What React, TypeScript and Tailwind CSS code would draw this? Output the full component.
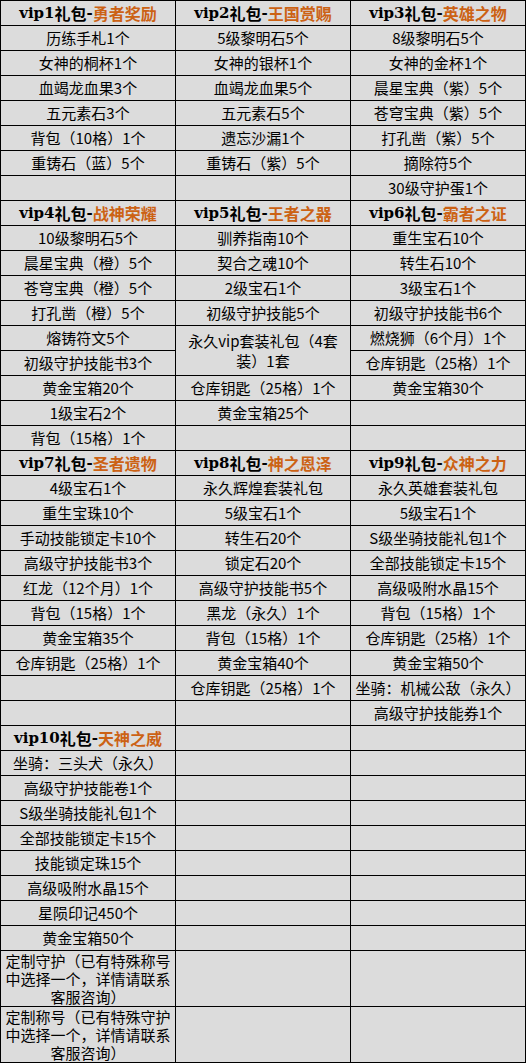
import React from "react";

type Cell =
  | string
  | { h: [string, string] }
  | { span: string[] }
  | { tall: string[] }
  | null;

const SKIP = null;

const rows: Cell[][] = [
  [{ h: ["vip1", "勇者奖励"] }, { h: ["vip2", "王国赏赐"] }, { h: ["vip3", "英雄之物"] }],
  ["历练手札1个", "5级黎明石5个", "8级黎明石5个"],
  ["女神的桐杯1个", "女神的银杯1个", "女神的金杯1个"],
  ["血竭龙血果3个", "血竭龙血果5个", "晨星宝典（紫）5个"],
  ["五元素石3个", "五元素石5个", "苍穹宝典（紫）5个"],
  ["背包（10格）1个", "遗忘沙漏1个", "打孔凿（紫）5个"],
  ["重铸石（蓝）5个", "重铸石（紫）5个", "摘除符5个"],
  ["", "", "30级守护蛋1个"],
  [{ h: ["vip4", "战神荣耀"] }, { h: ["vip5", "王者之器"] }, { h: ["vip6", "霸者之证"] }],
  ["10级黎明石5个", "驯养指南10个", "重生宝石10个"],
  ["晨星宝典（橙）5个", "契合之魂10个", "转生石10个"],
  ["苍穹宝典（橙）5个", "2级宝石1个", "3级宝石1个"],
  ["打孔凿（橙）5个", "初级守护技能5个", "初级守护技能书6个"],
  ["熔铸符文5个", { span: ["永久vip套装礼包（4套", "装）1套"] }, "燃烧狮（6个月）1个"],
  ["初级守护技能书3个", SKIP, "仓库钥匙（25格）1个"],
  ["黄金宝箱20个", "仓库钥匙（25格）1个", "黄金宝箱30个"],
  ["1级宝石2个", "黄金宝箱25个", ""],
  ["背包（15格）1个", "", ""],
  [{ h: ["vip7", "圣者遗物"] }, { h: ["vip8", "神之恩泽"] }, { h: ["vip9", "众神之力"] }],
  ["4级宝石1个", "永久辉煌套装礼包", "永久英雄套装礼包"],
  ["重生宝珠10个", "5级宝石1个", "5级宝石1个"],
  ["手动技能锁定卡10个", "转生石20个", "S级坐骑技能礼包1个"],
  ["高级守护技能书3个", "锁定石20个", "全部技能锁定卡15个"],
  ["红龙（12个月）1个", "高级守护技能书5个", "高级吸附水晶15个"],
  ["背包（15格）1个", "黑龙（永久）1个", "背包（15格）1个"],
  ["黄金宝箱35个", "背包（15格）1个", "仓库钥匙（25格）1个"],
  ["仓库钥匙（25格）1个", "黄金宝箱40个", "黄金宝箱50个"],
  ["", "仓库钥匙（25格）1个", "坐骑：机械公敌（永久）"],
  ["", "", "高级守护技能券1个"],
  [{ h: ["vip10", "天神之威"] }, "", ""],
  ["坐骑：三头犬（永久）", "", ""],
  ["高级守护技能卷1个", "", ""],
  ["S级坐骑技能礼包1个", "", ""],
  ["全部技能锁定卡15个", "", ""],
  ["技能锁定珠15个", "", ""],
  ["高级吸附水晶15个", "", ""],
  ["星陨印记450个", "", ""],
  ["黄金宝箱50个", "", ""],
  [{ tall: ["定制守护（已有特殊称号", "中选择一个，详情请联系", "客服咨询）"] }, { tall: [] }, { tall: [] }],
  [{ tall: ["定制称号（已有特殊守护", "中选择一个，详情请联系", "客服咨询）"] }, { tall: [] }, { tall: [] }],
];

function renderCell(c: Cell, key: string) {
  if (c === null) return null;
  if (typeof c === "string") {
    return (
      <div
        key={key}
        className="h-[24px] bg-[#dcdcdc] flex items-center justify-center text-center text-[15px] leading-[24px] text-black whitespace-nowrap overflow-hidden"
      >
        {c}
      </div>
    );
  }
  if ("h" in c) {
    return (
      <div
        key={key}
        className="h-[24px] bg-[#dcdcdc] flex items-center justify-center text-[16px] leading-[24px] font-bold text-black whitespace-nowrap"
      >
        <span className="text-[15px] font-['DejaVu_Serif',serif]">{c.h[0]}</span>
        <span>礼包</span>
        <span className="text-[15px] font-['DejaVu_Serif',serif]">-</span>
        <span className="text-[#cc6214]">{c.h[1]}</span>
      </div>
    );
  }
  if ("span" in c) {
    return (
      <div
        key={key}
        className="row-span-2 bg-[#dcdcdc] flex items-center justify-center text-center text-[15px] leading-[20px] text-black"
      >
        <p className="whitespace-nowrap">
          {c.span[0]}
          <br />
          {c.span[1]}
        </p>
      </div>
    );
  }
  return (
    <div
      key={key}
      className="h-[55px] bg-[#dcdcdc] flex items-center justify-center text-center text-[15px] leading-[18px] text-black"
    >
      {c.tall.length > 0 && (
        <p className="whitespace-nowrap">
          {c.tall[0]}
          <br />
          {c.tall[1]}
          <br />
          {c.tall[2]}
        </p>
      )}
    </div>
  );
}

export default function App() {
  return (
    <div className="w-[526px] bg-black p-px grid grid-cols-[174px_174px_174px] gap-px font-['Noto_Sans_CJK_SC','Noto_Sans',sans-serif]">
      {rows.map((r, ri) => r.map((c, ci) => renderCell(c, `${ri}-${ci}`)))}
    </div>
  );
}
